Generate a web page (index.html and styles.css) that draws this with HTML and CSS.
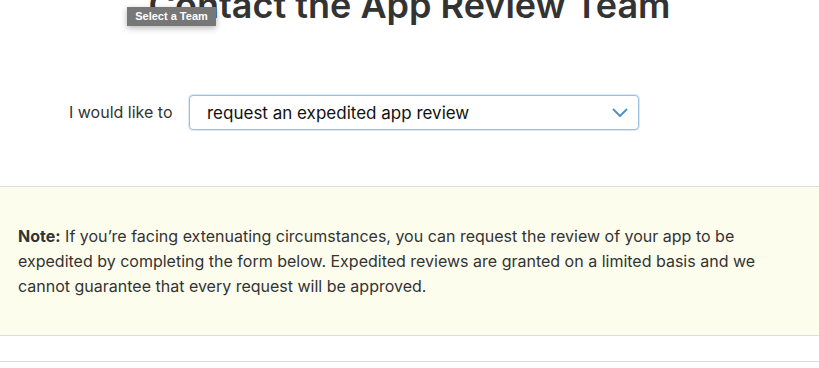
FILE: index.html
```html
<!DOCTYPE html>
<html>
  <head>
    <title>Contact the App Review Team</title>
    <link rel="stylesheet" href="styles.css">
  </head>
  <body>
    <div class="header">
      <h1>Contact the App Review Team</h1>
      <span class="tooltip">Select a Team</span>
    </div>
    <form class="topic-form">
      <label for="topic">I would like to</label>
      <div class="select-wrap">
        <select id="topic" name="topic">
          <option>request an expedited app review</option>
        </select>
        <svg class="chevron" width="16" height="10" viewBox="0 0 16 10">
          <path d="M1.5 1.5 L8 8 L14.5 1.5" fill="none" stroke="#4a90c8" stroke-width="1.8" stroke-linecap="round" stroke-linejoin="round"/>
        </svg>
      </div>
    </form>
    <div class="note">
      <p><strong>Note:</strong> If you’re facing extenuating circumstances, you can request the review of your app to be expedited by completing the form below. Expedited reviews are granted on a limited basis and we cannot guarantee that every request will be approved.</p>
    </div>
    <div class="divider"></div>
  </body>
</html>
```

FILE: styles.css
```css
* {
  box-sizing: border-box;
}

body {
  font-family: Inter, "Liberation Sans", Arial, sans-serif;
  margin: 0;
  padding: 0;
  color: #333;
  background: #fff;
}

.header {
  position: relative;
  display: flow-root;
  height: 60px;
}

h1 {
  margin: -13px 0 0;
  font-size: 36px;
  line-height: 36px;
  font-weight: 600;
  text-align: center;
  color: #333;
}

.tooltip {
  position: absolute;
  left: 127px;
  top: 7px;
  width: 89px;
  height: 19px;
  background: #777;
  color: #fff;
  font-family: "Liberation Sans", Arial, sans-serif;
  font-size: 11px;
  font-weight: bold;
  line-height: 19px;
  text-align: center;
  box-shadow: 0 2px 6px rgba(0, 0, 0, 0.3);
}

.topic-form {
  display: flex;
  align-items: flex-start;
  gap: 15px;
  padding: 35px 0 0 69px;
  height: 126px;
}

.topic-form label {
  font-size: 16px;
  line-height: 35px;
  width: 105px;
}

.select-wrap {
  position: relative;
  width: 450px;
}

select {
  appearance: none;
  width: 100%;
  height: 35px;
  padding: 0 40px 0 17px;
  font-family: inherit;
  font-size: 17px;
  color: #111;
  background: #fff;
  border: 1px solid #9cc0de;
  border-radius: 4px;
  box-shadow: 0 0 0 1px #dce9f4;
  outline: none;
}

.chevron {
  position: absolute;
  right: 11px;
  top: 13px;
  pointer-events: none;
}

.note {
  background: #fdfdee;
  border-top: 1px solid #ddd;
  border-bottom: 1px solid #ddd;
  height: 150px;
  padding: 37px 50px 0 18px;
}

.note p {
  margin: 0;
  font-size: 16px;
  line-height: 25px;
  color: #333;
}

.divider {
  margin-top: 25px;
  border-top: 1px solid #ddd;
}
```
